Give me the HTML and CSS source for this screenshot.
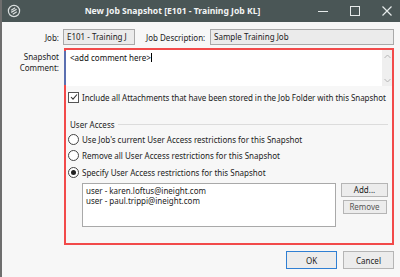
FILE: index.html
```html
<!DOCTYPE html>
<html>
<head>
    <title>New Job Snapshot</title>
    <link rel="stylesheet" href="styles.css">
</head>
<body>
    <div class="window">
        <div class="titlebar">
            <svg class="app-icon" width="14" height="14" viewBox="0 0 14 14">
                <circle cx="7" cy="7" r="5.6" fill="none" stroke="#d9dede" stroke-width="1.2"/>
                <path d="M4.2 6.2 L8.2 3.8 M4.2 8.4 L9.6 5.2 M5.8 10.2 L9.8 7.8" stroke="#d9dede" stroke-width="1.3" fill="none"/>
            </svg>
            <div class="title">New Job Snapshot [E101 - Training Job KL]</div>
            <div class="win-buttons">
                <svg width="10" height="10" viewBox="0 0 10 10"><path d="M0 5.5 H10" stroke="#e6eaea" stroke-width="1"/></svg>
                <svg width="10" height="10" viewBox="0 0 10 10"><rect x="0.5" y="0.5" width="9" height="9" fill="none" stroke="#e6eaea" stroke-width="1"/></svg>
                <svg width="10" height="10" viewBox="0 0 10 10"><path d="M0.5 0.5 L9.5 9.5 M9.5 0.5 L0.5 9.5" stroke="#e6eaea" stroke-width="1.2"/></svg>
            </div>
        </div>

        <div class="content">
            <div class="job-row">
                <label class="field-label">Job:</label>
                <div class="readonly job-code">E101 - Training J</div>
                <label class="desc-label">Job Description:</label>
                <div class="readonly job-desc">Sample Training Job</div>
            </div>

            <div class="main-row">
                <label class="field-label comment-label">Snapshot<br>Comment:</label>
                <div class="red-frame">
                    <div class="comment-box">
                        <div class="comment-text">&lt;add comment here&gt;<span class="caret"></span></div>
                        <div class="scrollbar">
                            <svg width="7" height="5" viewBox="0 0 7 5"><path d="M0.5 4 L3.5 1 L6.5 4" fill="none" stroke="#b4b4b4"/></svg>
                            <svg width="7" height="5" viewBox="0 0 7 5"><path d="M0.5 1 L3.5 4 L6.5 1" fill="none" stroke="#b4b4b4"/></svg>
                        </div>
                    </div>

                    <div class="option check-row">
                        <span class="checkbox">
                            <svg width="8" height="8" viewBox="0 0 8 8"><path d="M1 4 L3 6.2 L7 1.5" fill="none" stroke="#333" stroke-width="1.1"/></svg>
                        </span>
                        Include all Attachments that have been stored in the Job Folder with this Snapshot
                    </div>

                    <div class="group">
                        <div class="group-title"><span>User Access</span><span class="group-line"></span></div>
                        <div class="option"><span class="radio"></span>Use Job's current User Access restrictions for this Snapshot</div>
                        <div class="option"><span class="radio"></span>Remove all User Access restrictions for this Snapshot</div>
                        <div class="option"><span class="radio checked"></span>Specify User Access restrictions for this Snapshot</div>
                        <div class="users-row">
                            <div class="user-list">
                                <div>user - karen.loftus@ineight.com</div>
                                <div>user - paul.trippi@ineight.com</div>
                            </div>
                            <div class="list-buttons">
                                <button class="btn add-btn">Add...</button>
                                <button class="btn remove-btn">Remove</button>
                            </div>
                        </div>
                    </div>
                </div>
            </div>

            <div class="footer">
                <button class="btn dlg-btn ok-btn">OK</button>
                <button class="btn dlg-btn">Cancel</button>
            </div>
        </div>
    </div>
</body>
</html>
```

FILE: styles.css
```css
:root {
    --title-bg: #4a5656;
    --body-bg: #f7f7f7;
    --red: #f24a4a;
    --field-border: #a9a9a9;
    --text: #222;
}

body {
    margin: 0;
    width: 400px;
    height: 277px;
    overflow: hidden;
    font-family: 'Noto Sans', 'Open Sans', sans-serif;
    font-size: 8px;
    color: var(--text);
    background: var(--body-bg);
}

.window {
    height: 277px;
    border-left: 2px solid #6e6e6e;
    background: var(--body-bg);
}

.titlebar {
    height: 22px;
    background: var(--title-bg);
    display: flex;
    align-items: center;
    padding: 0 8px 0 4px;
    color: #fff;
}

.app-icon {
    margin-left: 1px;
}

.title {
    flex: 1;
    text-align: center;
    font-weight: bold;
    font-size: 8.6px;
    padding-left: 6px;
    color: #f2f4f4;
}

.win-buttons {
    display: flex;
    gap: 22px;
    align-items: center;
}

.content {
    padding: 7px 0 0 0;
}

.job-row {
    display: flex;
    align-items: center;
    height: 16px;
}

.field-label {
    width: 57px;
    text-align: right;
    flex-shrink: 0;
}

.readonly {
    height: 14px;
    line-height: 14px;
    background: #ebebeb;
    border: 1px solid var(--field-border);
    padding: 0 3px;
    white-space: nowrap;
    overflow: hidden;
}

.job-code {
    width: 64px;
    margin-left: 4px;
}

.desc-label {
    margin-left: 11px;
    width: 60px;
}

.job-desc {
    width: 176px;
    margin-left: 4px;
}

.main-row {
    display: flex;
    margin-top: 3px;
}

.comment-label {
    line-height: 11px;
    padding-top: 3px;
    margin-right: 5px;
}

.red-frame {
    width: 326px;
    height: 193px;
    border: 2px solid var(--red);
    display: flex;
    flex-direction: column;
}

.comment-box {
    height: 36px;
    background: #fff;
    display: flex;
    box-shadow: -3px 0 0 -1px #5b6fb0;
}

.comment-text {
    flex: 1;
    padding: 2px 4px;
    line-height: 11px;
    color: #111;
}

.caret {
    display: inline-block;
    width: 1px;
    height: 9px;
    background: #000;
    vertical-align: -1px;
}

.scrollbar {
    width: 10px;
    background: #efefef;
    display: flex;
    flex-direction: column;
    justify-content: space-between;
    align-items: center;
    padding: 4px 0 3px;
}

.option {
    display: flex;
    align-items: center;
    gap: 3px;
    height: 16.5px;
    white-space: nowrap;
}

.check-row {
    margin: 4px 0 0 2px;
    height: 14px;
    letter-spacing: -0.05px;
}

.checkbox {
    width: 9px;
    height: 9px;
    border: 1px solid #555;
    background: #fff;
    display: flex;
    align-items: center;
    justify-content: center;
}

.group {
    margin: 15px 4px 0 4px;
}

.group-title {
    display: flex;
    align-items: center;
    gap: 3px;
    height: 11px;
    margin-bottom: 1px;
}

.group-line {
    flex: 1;
    border-top: 1px solid #dcdcdc;
}

.group .option {
    margin-left: -2px;
}

.radio {
    width: 9px;
    height: 9px;
    border: 1px solid #444;
    border-radius: 50%;
    background: #fff;
    position: relative;
}

.radio.checked::after {
    content: '';
    position: absolute;
    left: 2px;
    top: 2px;
    width: 5px;
    height: 5px;
    border-radius: 50%;
    background: #222;
}

.users-row {
    display: flex;
    gap: 5px;
    margin-top: 2px;
    padding-left: 12px;
}

.user-list {
    width: 254px;
    height: 44px;
    border: 1px solid var(--field-border);
    background: #fff;
    padding: 2px 3px;
    box-sizing: border-box;
    line-height: 10px;
}

.list-buttons {
    display: flex;
    flex-direction: column;
    align-items: center;
    gap: 3px;
}

.btn {
    font-family: inherit;
    font-size: 8px;
    color: var(--text);
    background: #ececec;
    border: 1px solid #b5b5b5;
    padding: 0;
    height: 14px;
}

.add-btn {
    width: 47px;
}

.remove-btn {
    width: 44px;
    color: #555;
}

.footer {
    display: flex;
    justify-content: flex-end;
    gap: 6px;
    margin-top: 6px;
    padding-right: 6px;
}

.dlg-btn {
    width: 51px;
    height: 18px;
}

.ok-btn {
    border: 1.5px solid #2f7fd3;
}
```
